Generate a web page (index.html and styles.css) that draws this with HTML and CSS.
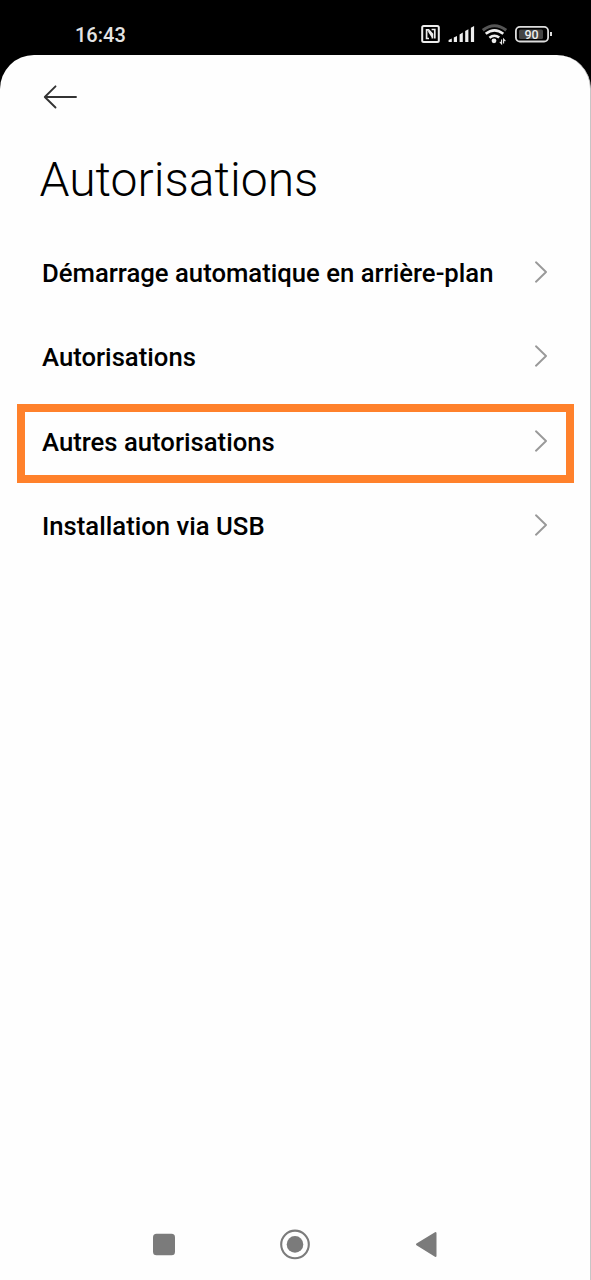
FILE: index.html
```html
<!DOCTYPE html>
<html lang="fr">
<head>
<meta charset="utf-8">
<title>Autorisations</title>
<link rel="stylesheet" href="styles.css">
</head>
<body>
<div class="phone">
  <header class="status">
    <span class="time">16:43</span>
    <svg class="status-icons" width="136" height="24" viewBox="419 22 136 24" fill="none">
      <rect x="422.2" y="25.9" width="16.6" height="16.2" rx="1.5" stroke="#eee" stroke-width="2"/>
      <path d="M429 38.5H426.6V29.8H428.6L432.4 34V38.4M431.6 29.5H434.8V38.5M428.6 31L432.4 37" stroke="#eee" stroke-width="1.7"/>
      <path d="M448.6 40L451.8 38.6V42H448.6ZM453.8 37.6L457 36V42H453.8ZM459.6 34.4L462.8 32.6V42H459.6ZM465.2 31L468.4 29.2V42H465.2ZM470.9 27.8L474.1 26V42H470.9Z" fill="#eee"/>
      <path d="M482.8 30.2Q494.5 21.2 506.2 30.2" stroke="#555" stroke-width="3"/>
      <path d="M485.7 33.8Q494.5 26.8 503.3 33.8M489.4 37.8Q494.5 33.8 499.2 37.6" stroke="#eee" stroke-width="2.6"/>
      <circle cx="494" cy="40.8" r="2.4" fill="#eee"/>
      <path d="M501.6 39.5v4.3l-1.8-2M503.6 43.5v-4.3l1.8 2" stroke="#eee" stroke-width="1.1"/>
      <rect x="515.9" y="26.9" width="32.2" height="14.6" rx="4" stroke="#ddd" stroke-width="1.8"/>
      <rect x="519" y="29.4" width="24" height="9.6" rx="1.5" fill="#444"/>
      <path d="M551 32v4" stroke="#ddd" stroke-width="2"/>
      <text class="battery" x="531.6" y="38.8" text-anchor="middle">90</text>
    </svg>
  </header>
  <main class="screen">
    <svg class="back" width="36" height="26" viewBox="42 84 36 26" fill="none" stroke="#333" stroke-width="1.9" stroke-linecap="round" stroke-linejoin="round">
      <path d="M76 97H45M55.5 86.3L44.8 97L55.5 107.5"/>
    </svg>
    <h1 class="title">Autorisations</h1>
    <ul class="list">
      <li class="row"><span class="label">Démarrage automatique en arrière-plan</span><svg class="chevron" viewBox="0 0 14 22"><path d="M2 1.3L12 11L2 20.7"/></svg></li>
      <li class="row"><span class="label">Autorisations</span><svg class="chevron" viewBox="0 0 14 22"><path d="M2 1.3L12 11L2 20.7"/></svg></li>
      <li class="row selected"><span class="label">Autres autorisations</span><svg class="chevron" viewBox="0 0 14 22"><path d="M2 1.3L12 11L2 20.7"/></svg></li>
      <li class="row"><span class="label">Installation via USB</span><svg class="chevron" viewBox="0 0 14 22"><path d="M2 1.3L12 11L2 20.7"/></svg></li>
    </ul>
    <svg class="nav" width="591" height="70" viewBox="0 1210 591 70" fill="#7b7b7b">
      <rect x="153" y="1233.7" width="22" height="21.6" rx="3.5"/>
      <circle cx="295" cy="1244.4" r="13.8" fill="none" stroke="#7b7b7b" stroke-width="2.1"/>
      <circle cx="295" cy="1244.4" r="8.3"/>
      <path d="M417 1244.4L435.5 1233V1256Z" stroke="#7b7b7b" stroke-width="2" stroke-linejoin="round"/>
    </svg>
  </main>
</div>
</body>
</html>
```

FILE: styles.css
```css
* { box-sizing: border-box; }
body { margin: 0; background: #000; font-family: Roboto, sans-serif; }
.phone { width: 591px; height: 1280px; display: flex; flex-direction: column; overflow: hidden; }
.status {
  height: 55px;
  padding: 22px 36px 0 75px;
  display: flex;
  align-items: flex-start;
  justify-content: space-between;
}
.time { padding-top: 1px; font-size: 20px; line-height: 24px; font-weight: 500; color: #e4e4e4; }
.battery { font: 500 12.5px Roboto, sans-serif; fill: #eee; }
.screen {
  flex: 1;
  background: #fefefe;
  border-right: 1px solid #c6c6c6;
  border-radius: 34px 34px 0 0;
  display: flex;
  flex-direction: column;
}
.back { margin: 29px 0 0 42px; flex: none; }
.title { margin: 40px 0 0 39.5px; font-size: 48px; line-height: 60px; font-weight: 300; white-space: nowrap; color: #000; }
.list { list-style: none; margin: 20px 0 0; padding: 0 16px 0 17px; }
.row {
  height: 84.2px;
  padding: 0 26px 0 25px;
  display: flex;
  align-items: center;
  justify-content: space-between;
}
.selected { height: 79px; margin: 5.6px 0 -0.4px; padding: 0 18px 5px 17px; border: 8px solid #ff812b; }
.label { padding-top: 2px; font-size: 25.7px; line-height: 30px; font-weight: 500; white-space: nowrap; color: #000; }
.chevron { width: 14px; height: 22px; flex: none; fill: none; stroke: #999; stroke-width: 1.9; stroke-linecap: round; stroke-linejoin: round; }
.nav { margin-top: auto; flex: none; }
```
